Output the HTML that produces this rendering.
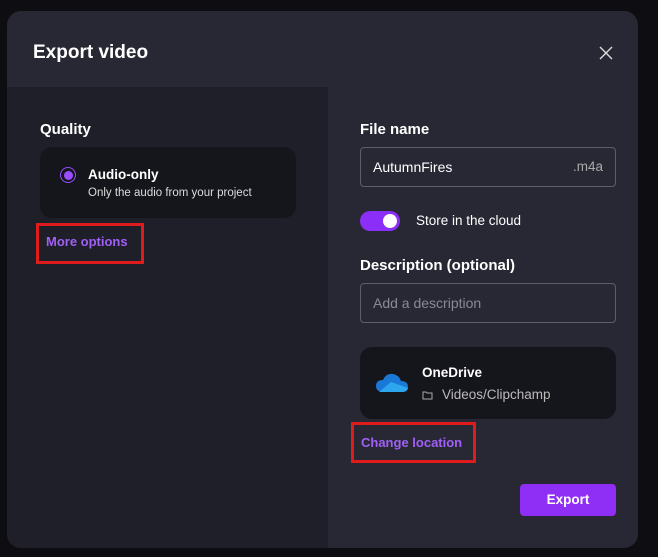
<!DOCTYPE html>
<html><head><style>
*{margin:0;padding:0;box-sizing:border-box}
body{width:658px;height:557px;background:#0e0e12;font-family:"Liberation Sans",sans-serif;position:relative;overflow:hidden;color:#fff}
.a{position:absolute}
.dlg{left:7px;top:11px;width:631px;height:537px;border-radius:14px;background:#272833;overflow:hidden}
.b{font-weight:bold}
</style></head><body>
<div class="a dlg">
  <div class="a" style="left:0;top:76px;width:321px;height:461px;background:#1f1f29"></div>
</div>
<div class="a b" style="left:33px;top:42px;font-size:19px">Export video</div>
<svg class="a" style="left:599px;top:46px" width="14" height="14"><path d="M1 1L13 13M13 1L1 13" stroke="#ddd" stroke-width="1.4"/></svg>

<div class="a b" style="left:40px;top:121px;font-size:15px">Quality</div>
<div class="a" style="left:40px;top:147px;width:256px;height:71px;background:#15151c;border-radius:12px"></div>
<div class="a" style="left:60px;top:167px;width:16px;height:16px;border:1.5px solid #9b4dff;border-radius:50%"></div>
<div class="a" style="left:63.5px;top:170.5px;width:9px;height:9px;background:#9b4dff;border-radius:50%"></div>
<div class="a b" style="left:88px;top:167px;font-size:13.5px">Audio-only</div>
<div class="a" style="left:88px;top:187px;font-size:11.5px;color:#ddd">Only the audio from your project</div>
<div class="a" style="left:36px;top:223px;width:108px;height:41px;border:3px solid #e01b1b"></div>
<div class="a b" style="left:46px;top:234px;font-size:13px;color:#a060f5">More options</div>

<div class="a b" style="left:360px;top:121px;font-size:15px">File name</div>
<div class="a" style="left:360px;top:147px;width:256px;height:40px;border:1px solid #5b5c6c;border-radius:4px"></div>
<div class="a" style="left:373px;top:159px;font-size:14px">AutumnFires</div>
<div class="a" style="left:573px;top:159px;font-size:13.5px;color:#aaa">.m4a</div>
<div class="a" style="left:360px;top:211px;width:40px;height:20px;border-radius:10px;background:#8b2ff8"></div>
<div class="a" style="left:383px;top:214px;width:14px;height:14px;border-radius:50%;background:#fff"></div>
<div class="a" style="left:416px;top:213px;font-size:13.5px">Store in the cloud</div>
<div class="a b" style="left:360px;top:257px;font-size:15px">Description (optional)</div>
<div class="a" style="left:360px;top:283px;width:256px;height:40px;border:1px solid #5b5c6c;border-radius:4px"></div>
<div class="a" style="left:373px;top:295px;font-size:14px;color:#8a8a96">Add a description</div>

<div class="a" style="left:360px;top:347px;width:256px;height:72px;background:#15151c;border-radius:12px"></div>
<svg class="a" style="left:375px;top:372px" width="34" height="22" viewBox="0 0 34 22">
<path d="M9 20 Q1 20 1 14 Q1 8 8 8 Q11 1 18 2 Q24 3 26 9 Q33 9 33 15 Q33 20 27 20Z" fill="#1a78d6"/>
<path d="M4 20 L16 10 L33 16 Q32 20 27 20Z" fill="#2ea6ee"/>
</svg>
<div class="a b" style="left:422px;top:365px;font-size:13.5px">OneDrive</div>
<svg class="a" style="left:422px;top:390px" width="11" height="10"><path d="M1 2h3l1 1h5v6H1z" fill="none" stroke="#aaa"/></svg>
<div class="a" style="left:442px;top:387px;font-size:13.5px;color:#bbb">Videos/Clipchamp</div>
<div class="a" style="left:351px;top:422px;width:125px;height:41px;border:3px solid #e01b1b"></div>
<div class="a b" style="left:361px;top:435px;font-size:13px;color:#a060f5">Change location</div>
<div class="a b" style="left:520px;top:484px;width:96px;height:32px;background:#8f2ff5;border-radius:4px;font-size:13.5px;text-align:center;line-height:32px">Export</div>
</body></html>
